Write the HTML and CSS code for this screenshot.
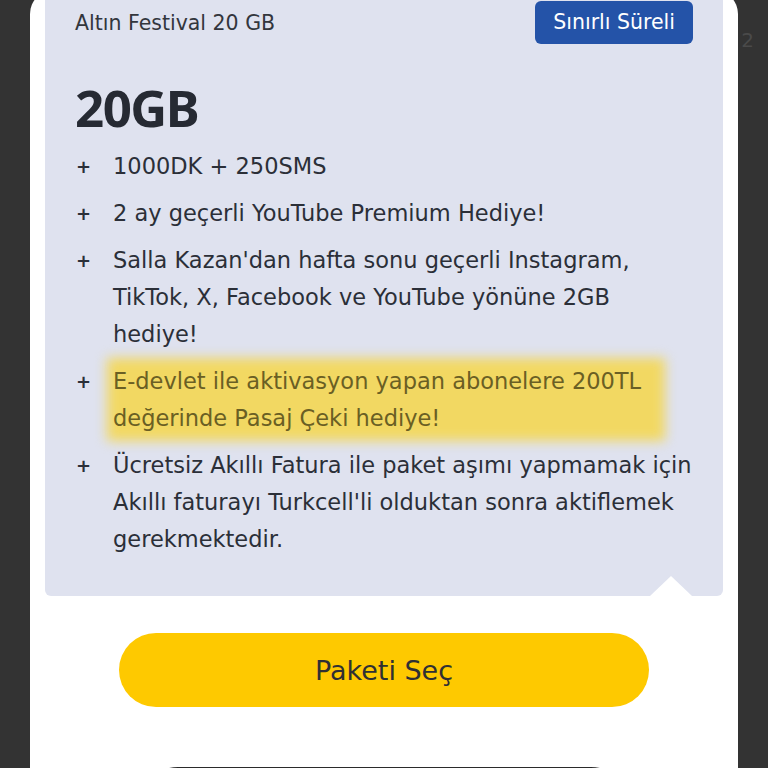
FILE: index.html
```html
<!DOCTYPE html>
<html lang="tr">
<head>
<meta charset="utf-8">
<title>Altın Festival 20 GB</title>
<link rel="stylesheet" href="styles.css">
</head>
<body>
<span class="behind">2</span>
<div class="panel">
  <section class="card">
    <header class="card-head">
      <span class="card-title">Altın Festival 20 GB</span>
      <span class="badge">Sınırlı Süreli</span>
    </header>
    <div class="amount">20GB</div>
    <ul class="features">
      <li class="feature"><span class="plus">+</span><span class="ftext">1000DK + 250SMS</span></li>
      <li class="feature"><span class="plus">+</span><span class="ftext">2 ay geçerli YouTube Premium Hediye!</span></li>
      <li class="feature"><span class="plus">+</span><span class="ftext">Salla Kazan'dan hafta sonu geçerli Instagram, TikTok, X, Facebook ve YouTube yönüne 2GB hediye!</span></li>
      <li class="feature highlight"><span class="plus">+</span><span class="ftext">E-devlet ile aktivasyon yapan abonelere 200TL değerinde Pasaj Çeki hediye!</span></li>
      <li class="feature"><span class="plus">+</span><span class="ftext">Ücretsiz Akıllı Fatura ile paket aşımı yapmamak için Akıllı faturayı Turkcell'li olduktan sonra aktiflemek gerekmektedir.</span></li>
    </ul>
    <span class="notch"></span>
  </section>
  <div class="actions">
    <button class="btn btn-primary">Paketi Seç</button>
    <button class="btn btn-outline" aria-label="Detaylar"></button>
  </div>
</div>
</body>
</html>
```
FILE: styles.css
```css
html, body {
  margin: 0;
  padding: 0;
}
body {
  background: #333333;
  height: 768px;
  overflow: hidden;
  font-family: "DejaVu Sans", "Noto Sans", sans-serif;
  color: #2b2f38;
  position: relative;
}
.behind {
  position: absolute;
  right: 14px;
  top: 28px;
  font-size: 20px;
  color: #4a4a4a;
}
.panel {
  margin: -10px 0 0 30px;
  width: 708px;
  height: 778px;
  overflow: hidden;
  background: #ffffff;
  border-radius: 24px 24px 0 0;
  padding: 0 15px;
  box-sizing: border-box;
}
.card {
  position: relative;
  background: #dfe2ef;
  border-radius: 0 0 6px 6px;
  padding: 11px 30px 38px 30px;
}
.card-head {
  display: flex;
  justify-content: space-between;
  align-items: center;
  height: 43px;
}
.card-title {
  font-size: 20.5px;
  color: #33363d;
}
.badge {
  background: #2453a8;
  color: #ffffff;
  font-size: 20.5px;
  height: 43px;
  line-height: 43px;
  padding: 0 18px;
  border-radius: 6px;
}
.amount {
  margin-top: 33px;
  font-family: "Noto Sans", sans-serif;
  font-size: 51px;
  font-weight: 700;
  line-height: 60px;
  color: #262a33;
  letter-spacing: -1.5px;
}
.features {
  list-style: none;
  margin: 11px -5px 0 0;
  padding: 0;
  display: flex;
  flex-direction: column;
  gap: 10px;
}
.feature {
  display: flex;
  font-size: 22.5px;
  line-height: 37px;
}
.plus {
  flex: 0 0 37px;
  font-weight: 700;
  font-size: 18px;
  padding-left: 1px;
}
.ftext {
  flex: 1;
  position: relative;
  z-index: 0;
}
.highlight .ftext {
  color: #6a5f24;
}
.highlight .ftext::before {
  content: "";
  position: absolute;
  left: -6px;
  width: 558px;
  top: -5px;
  bottom: -4px;
  background: #f2d862;
  filter: blur(6px);
  z-index: -1;
}
.notch {
  position: absolute;
  right: 31px;
  bottom: 0;
  width: 42px;
  height: 20px;
  background: #ffffff;
  clip-path: polygon(50% 0, 100% 100%, 0 100%);
}
.actions {
  display: flex;
  flex-direction: column;
  align-items: center;
  padding-top: 37px;
  gap: 60px;
}
.btn {
  font-family: inherit;
  border-radius: 40px;
  cursor: pointer;
  font-size: 27px;
  color: #2f3033;
  flex: 0 0 auto;
}
.btn-primary {
  width: 530px;
  height: 74px;
  background: #fec900;
  border: none;
}
.btn-outline {
  width: 487px;
  height: 74px;
  background: #ffffff;
  border: 2px solid #2b2b2b;
}
```
